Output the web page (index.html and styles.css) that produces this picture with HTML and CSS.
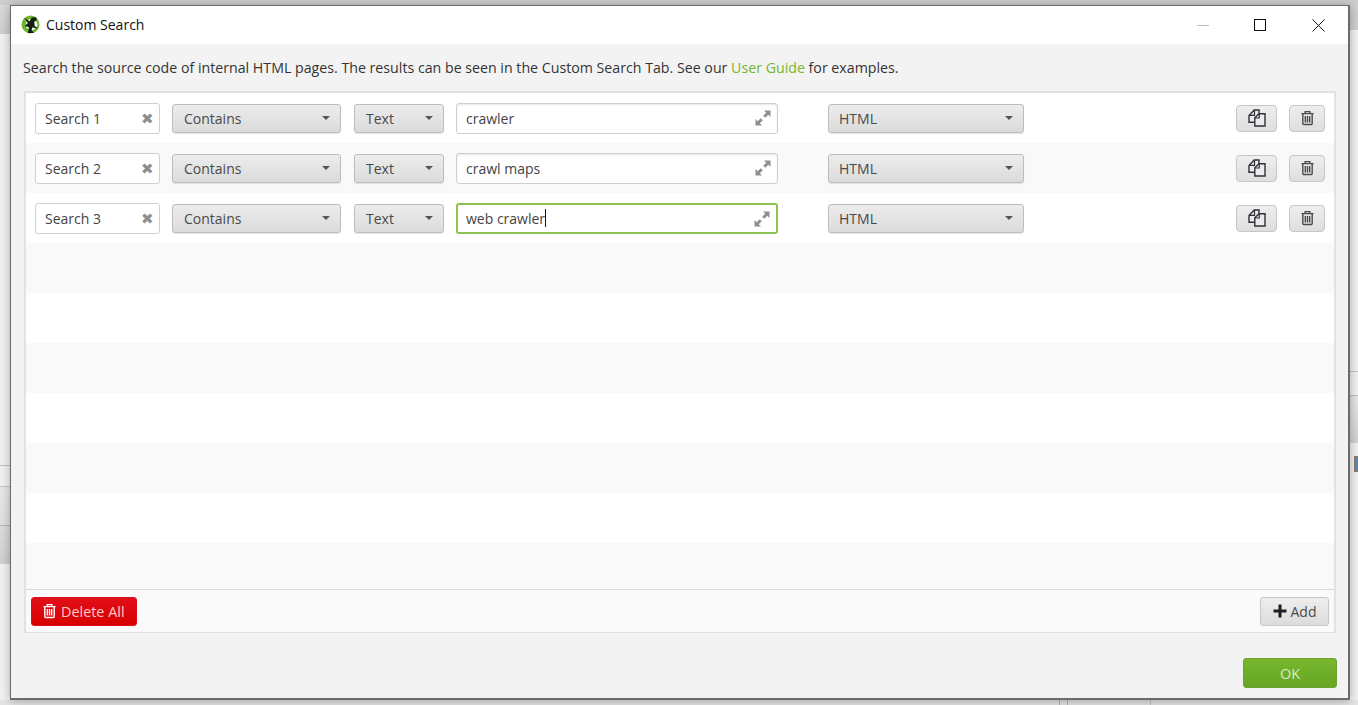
FILE: index.html
```html
<!DOCTYPE html>
<html lang="en">
<head>
<meta charset="utf-8">
<title>Custom Search</title>
<link rel="stylesheet" href="styles.css">
</head>
<body>
<svg class="sprites" width="0" height="0" aria-hidden="true">
  <symbol id="trash" viewBox="0 0 16 16"><path d="M5.500 3V1.200h5V3M1.500 3.300h13M3 3.500v10.400c0 .7.4 1.100 1 1.100h8c.6 0 1-.4 1-1.100V3.500M5.700 5.800v6.900M8 5.800v6.900M10.300 5.800v6.900" fill="none" stroke="currentColor" stroke-width="1.500"/></symbol>
  <symbol id="copy" viewBox="0 0 18 18"><path d="M6.500 13.200H1V6.500L6.200 1h4.800v4" fill="#ebebeb" stroke="currentColor" stroke-width="1.400"/><path d="M6.500 1.300v5H1.300" fill="none" stroke="currentColor" stroke-width="1.200"/><path d="M6.800 17V8.800L11 4.800h6V17z" fill="#ebebeb" stroke="currentColor" stroke-width="1.400"/><path d="M11.200 5v4H7" fill="none" stroke="currentColor" stroke-width="1.200"/></symbol>
  <symbol id="expand" viewBox="0 0 16 16"><path d="M9 .5h6.500V7l-2.200-2.200-3 3-2.100-2.100 3-3zM7 15.500H.5V9l2.200 2.200 3-3 2.100 2.100-3 3z" fill="currentColor"/></symbol>
</svg>

<div class="backdrop">
  <span class="bg-top"></span>
  <span class="bg-bottom"></span>
  <span class="bg-corner-l"></span>
  <span class="bg-corner-r"></span>
  <span class="bg-line-l"></span>
  <span class="bg-line-r"></span>
  <span class="bg-band-l"></span>
  <span class="bg-band-l2"></span>
  <span class="bg-band-r"></span>
  <span class="bg-mark"></span>
</div>

<main class="window">
  <header class="titlebar">
    <svg class="app-logo" viewBox="0 0 18 18" aria-hidden="true">
      <circle cx="9" cy="9" r="8.500" fill="#6fb52c"/>
      <circle cx="10" cy="9" r="5.500" fill="#fff"/>
      <path d="M3 2.500 8 6l2-3.500L14 2l1 3-2.500 1.500.5 4 2.500 1.500-1 1-3.500-1.500-1 3 2.500 2.500H6.500l1-5.500-4-1L6.500 7.500z" fill="#15200f"/>
    </svg>
    <h1 class="title">Custom Search</h1>
    <div class="win-controls">
      <span class="win-min"></span>
      <span class="win-max"></span>
      <svg class="win-close" viewBox="0 0 13 13" aria-hidden="true"><path d="M.5.500l12 12M12.500.500l-12 12" stroke="#111" stroke-width="1"/></svg>
    </div>
  </header>

  <div class="content">
    <p class="intro">Search the source code of internal HTML pages. The results can be seen in the Custom Search Tab. See our <a class="link">User Guide</a> for examples.</p>

    <section class="panel">
      <div class="rows">
        <div class="row">
          <div class="field name"><span class="field-text">Search 1</span><span class="clear">✖</span></div>
          <div class="select s-contains"><span>Contains</span><i class="caret"></i></div>
          <div class="select s-text"><span>Text</span><i class="caret"></i></div>
          <div class="field query"><span class="field-text">crawler</span><svg class="expand"><use href="#expand"/></svg></div>
          <div class="select s-html"><span>HTML</span><i class="caret"></i></div>
          <button class="icon-btn btn-copy"><svg class="i-copy"><use href="#copy"/></svg></button>
          <button class="icon-btn btn-trash"><svg class="i-trash"><use href="#trash"/></svg></button>
        </div>
        <div class="row">
          <div class="field name"><span class="field-text">Search 2</span><span class="clear">✖</span></div>
          <div class="select s-contains"><span>Contains</span><i class="caret"></i></div>
          <div class="select s-text"><span>Text</span><i class="caret"></i></div>
          <div class="field query"><span class="field-text">crawl maps</span><svg class="expand"><use href="#expand"/></svg></div>
          <div class="select s-html"><span>HTML</span><i class="caret"></i></div>
          <button class="icon-btn btn-copy"><svg class="i-copy"><use href="#copy"/></svg></button>
          <button class="icon-btn btn-trash"><svg class="i-trash"><use href="#trash"/></svg></button>
        </div>
        <div class="row">
          <div class="field name"><span class="field-text">Search 3</span><span class="clear">✖</span></div>
          <div class="select s-contains"><span>Contains</span><i class="caret"></i></div>
          <div class="select s-text"><span>Text</span><i class="caret"></i></div>
          <div class="field query focused"><span class="field-text">web crawler</span><i class="cursor"></i><svg class="expand"><use href="#expand"/></svg></div>
          <div class="select s-html"><span>HTML</span><i class="caret"></i></div>
          <button class="icon-btn btn-copy"><svg class="i-copy"><use href="#copy"/></svg></button>
          <button class="icon-btn btn-trash"><svg class="i-trash"><use href="#trash"/></svg></button>
        </div>
        <div class="row"></div>
        <div class="row"></div>
        <div class="row"></div>
        <div class="row"></div>
        <div class="row"></div>
        <div class="row"></div>
        <div class="row row-short"></div>
      </div>
      <div class="panel-foot">
        <button class="btn-danger"><svg class="i-danger"><use href="#trash"/></svg>Delete All</button>
        <button class="btn-add"><svg class="i-plus" viewBox="0 0 14 14" aria-hidden="true"><path d="M5.500 .5h3v5h5v3h-5v5h-3v-5h-5v-3h5z" fill="currentColor"/></svg>Add</button>
      </div>
    </section>

    <div class="actions"><button class="btn-ok">OK</button></div>
  </div>
</main>
</body>
</html>
```
FILE: styles.css
```css
* { box-sizing: border-box; }
html, body { margin: 0; height: 705px; overflow: hidden; }
body {
  background: #f1f1f1;
  font-family: "Open Sans", "Liberation Sans", sans-serif;
  font-size: 14px;
  color: #333;
  position: relative;
}
.sprites { position: absolute; }
.backdrop { position: absolute; inset: 0; }
.backdrop span { position: absolute; }
.bg-top { left: 0; right: 0; top: 0; height: 5px; background: #cdcdcd; }
.bg-bottom {
  left: 0; right: 0; top: 700px; height: 5px;
  background:
    linear-gradient(#b5b5b5, #b5b5b5) 1059px 0 / 1px 100% no-repeat,
    linear-gradient(#b5b5b5, #b5b5b5) 1067px 0 / 1px 100% no-repeat,
    linear-gradient(#c4c4c4, #c4c4c4) 1150px 0 / 1px 100% no-repeat,
    #e4e4e4;
}
.bg-corner-l { left: 0; width: 10px; top: 5px; height: 29px; background: linear-gradient(#d9d9d9, #cdcdcd); }
.bg-corner-r { right: 0; width: 8px; top: 5px; height: 25px; background: #cfcfcf; }
.bg-line-l { left: 0; width: 10px; top: 465px; height: 1px; background: #c4c4c4; }
.bg-line-r { right: 0; width: 8px; top: 371px; height: 1px; background: #c4c4c4; }
.bg-band-l { left: 0; width: 10px; top: 486px; height: 39px; background: linear-gradient(#e8e8e8, #dedede); border-top: 1px solid #c6c6c6; }
.bg-band-l2 { left: 0; width: 10px; top: 525px; height: 39px; background: linear-gradient(#dcdcdc, #cfcfcf); border-top: 1px solid #b5b5b5; }
.bg-band-r { right: 0; width: 8px; top: 395px; height: 48px; background: linear-gradient(#e6e6e6, #d2d2d2); border-top: 1px solid #bdbdbd; }
.bg-mark { right: 0; top: 456px; width: 4px; height: 16px; background: #5d88b5; border: 1px solid #8a7b66; border-right: 0; }

.window {
  position: absolute;
  left: 10px;
  top: 5px;
  width: 1340px;
  height: 695px;
  border-style: solid;
  border-color: #6b6b6b;
  border-width: 1.500px 2px 2px 1.500px;
  background: #f3f3f3;
  box-shadow: 0 1px 9px rgba(0,0,0,.3);
  display: flex;
  flex-direction: column;
}
.titlebar {
  height: 38px;
  background: #fff;
  display: flex;
  align-items: center;
  padding-left: 10px;
  flex: none;
}
.app-logo { width: 19px; height: 19px; margin-right: 6px; margin-top: -2px; }
.title { font-size: 14px; font-weight: 400; margin: -2px 0 0; color: #111; }
.win-controls { margin-left: auto; display: flex; align-items: center; height: 100%; }
.win-min { width: 12px; height: 1px; background: #bdbdbd; margin-right: 45px; }
.win-max { width: 12px; height: 12px; border: 1.500px solid #111; margin-right: 46px; }
.win-close { width: 13px; height: 13px; margin-right: 23px; }

.content { flex: 1; padding: 0 12px; display: flex; flex-direction: column; min-height: 0; }
.intro { margin: 14px 0 0; height: 20px; line-height: 20px; font-size: 14.200px; color: #333; white-space: nowrap; }
.link { color: #76b62e; }

.panel {
  margin: 13px 0 0 1px;
  height: 542px;
  width: 1312px;
  background: #fff;
  border: 2px solid #e2e2e2;
  border-bottom-width: 1px;
  display: flex;
  flex-direction: column;
}
.rows { flex: 1; display: flex; flex-direction: column; min-height: 0; }
.row {
  height: 50px;
  flex: none;
  display: flex;
  align-items: center;
  padding-left: 9px;
  background: #fff;
}
.row:nth-child(even) { background: #f9f9f9; }
.row-short { height: 46px; }

.field {
  height: 31px;
  background: #fff;
  border: 1px solid #d0d0d0;
  border-radius: 3px;
  display: flex;
  align-items: center;
  position: relative;
  color: #444;
}
.field-text { padding-left: 9px; white-space: nowrap; }
.name { width: 125px; }
.name .clear { margin-left: auto; margin-right: 5px; font-size: 15px; color: #8f8f8f; line-height: 1; }
.query { width: 322px; margin-left: 12px; border-color: #cfcfcf; box-shadow: inset 0 1px 2px rgba(0,0,0,.1); }
.query.focused { border: 2px solid #8cc153; box-shadow: none; }
.query.focused .field-text { padding-left: 8px; }
.cursor { width: 1px; height: 18px; background: #111; }
.expand { width: 16px; height: 16px; color: #8f8f8f; position: absolute; right: 6px; top: 6px; }

.select {
  height: 29px;
  border: 1px solid #bdbdbd;
  border-radius: 3px;
  background: linear-gradient(#ececec, #dbdbdb);
  box-shadow: 0 1px 1px rgba(0,0,0,.1);
  display: flex;
  align-items: center;
  justify-content: space-between;
  padding: 0 10px 0 11px;
  color: #4a4a4a;
}
.s-contains { width: 169px; margin-left: 12px; }
.s-text { width: 90px; margin-left: 13px; }
.s-html { width: 196px; margin-left: 50px; padding-left: 10px; }
.caret { width: 0; height: 0; border-left: 4.500px solid transparent; border-right: 4.500px solid transparent; border-top: 4px solid #555; }

.icon-btn {
  height: 27px;
  padding: 0;
  border: 1px solid #c6c6c6;
  border-radius: 4px;
  background: linear-gradient(#eeeeee, #dedede);
  display: flex;
  align-items: center;
  justify-content: center;
  color: #2f2f3a;
}
.btn-copy { width: 41px; margin-left: auto; }
.btn-trash { width: 36px; margin-left: 12px; margin-right: 9px; }
.i-copy { width: 18px; height: 18px; }
.i-trash { width: 15px; height: 16px; color: #4a4a50; }

.panel-foot {
  height: 43px;
  flex: none;
  border-top: 1px solid #d9d9d9;
  background: #fafafa;
  display: flex;
  align-items: center;
  justify-content: space-between;
  padding: 0 5px 0 5px;
}
.btn-danger {
  width: 106px;
  height: 29px;
  border: 1px solid #d9101a;
  border-radius: 3px;
  background: linear-gradient(#e20f1a, #d80000);
  color: #ffc9c9;
  font: inherit;
  font-size: 14.400px;
  padding: 0 0 0 10px;
  display: flex;
  align-items: center;
  gap: 4px;
}
.i-danger { width: 15px; height: 16px; color: #fff; }
.btn-add {
  width: 69px;
  height: 29px;
  border: 1px solid #c6c6c6;
  border-radius: 3px;
  background: linear-gradient(#eeeeee, #dcdcdc);
  color: #4a4a4a;
  font: inherit;
  padding: 0;
  display: flex;
  align-items: center;
  justify-content: center;
  gap: 4px;
}
.i-plus { width: 14px; height: 14px; color: #1f1f1f; }

.actions { display: flex; justify-content: flex-end; margin-top: 25px; width: 1314px; }
.btn-ok {
  width: 94px;
  height: 30px;
  border: 1px solid #6da32e;
  border-radius: 3px;
  background: linear-gradient(#78b72e, #66a524);
  color: #d7ecc0;
  font: inherit;
  font-size: 14.500px;
  padding: 0;
}
```
